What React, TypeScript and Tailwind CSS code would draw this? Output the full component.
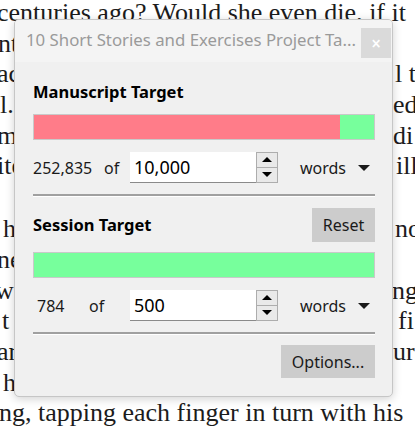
const serif = { fontFamily: '"Liberation Serif", "Times New Roman", serif' };

type Line = { left: string; leftShift?: string; right?: string; rightShift?: string };

const para1: Line[] = [
  { left: "centuries ago? Would she even die, if it", leftShift: "-ml-[3px]" },
  { left: "nt", leftShift: "-ml-[2px]" },
  { left: "ac", leftShift: "-ml-[3px]", right: "l te", rightShift: "ml-[2px]" },
  { left: "l.", leftShift: "ml-0", right: "ed", rightShift: "ml-0" },
  { left: "me", leftShift: "-ml-[3px]", right: "di", rightShift: "ml-0" },
  { left: "ite", leftShift: "-ml-[3px]", right: "ill", rightShift: "ml-[3px]" },
];

const para2: Line[] = [
  { left: "h", leftShift: "ml-[3px]", right: "no", rightShift: "ml-[2px]" },
  { left: "ne", leftShift: "-ml-[3px]" },
  { left: "w", leftShift: "-ml-[5px]", right: "ng", rightShift: "-ml-[1px]" },
  { left: "t", leftShift: "ml-[2px]", right: "fi", rightShift: "ml-[5px]" },
  { left: "ar", leftShift: "-ml-[3px]", right: "ur", rightShift: "ml-0" },
  { left: "h", leftShift: "ml-[3px]" },
  { left: "ng, tapping each finger in turn with his", leftShift: "-ml-[1px]" },
];

function DocLine({ line }: { line: Line }) {
  return (
    <div className="flex whitespace-nowrap h-[30.7px] leading-[30.7px]">
      <div className="w-[393px] shrink-0">
        <span className={`inline-block ${line.leftShift ?? ""}`}>{line.left}</span>
      </div>
      {line.right && (
        <span className={`inline-block shrink-0 ${line.rightShift ?? ""}`}>{line.right}</span>
      )}
    </div>
  );
}

function Bar({ fill }: { fill: string }) {
  return (
    <div className="h-[26px] border border-[#c9c9c9] bg-[#77ff9c] flex">
      <div className={`h-full bg-[#ff7c89] ${fill}`}></div>
    </div>
  );
}

function Spin({ value }: { value: string }) {
  return (
    <div className="w-[148px] h-[31px] bg-white border-b border-[#8a8a8a] flex items-center">
      <span className="flex-1 pl-[4px] text-[18px] text-black">{value}</span>
      <div className="w-[22px] h-[31px] flex flex-col border border-[#adadad] bg-[#e9e9e9]">
        <div className="flex-1 flex items-center justify-center border-b border-[#adadad]">
          <div className="w-0 h-0 border-l-[5px] border-r-[5px] border-b-[5px] border-l-transparent border-r-transparent border-b-black"></div>
        </div>
        <div className="flex-1 flex items-center justify-center">
          <div className="w-0 h-0 border-l-[5px] border-r-[5px] border-t-[5px] border-l-transparent border-r-transparent border-t-black"></div>
        </div>
      </div>
    </div>
  );
}

function Units() {
  return (
    <div className="ml-auto flex items-center">
      <span className="text-[16px] text-[#1a1a1a]">words</span>
      <div className="ml-[12px] mr-[5px] w-0 h-0 border-l-[6px] border-r-[6px] border-t-[6px] border-l-transparent border-r-transparent border-t-[#1a1a1a]"></div>
    </div>
  );
}

function Divider() {
  return <div className="h-[3px] border-t-2 border-[#a0a0a0] border-b border-b-white"></div>;
}

export default function App() {
  return (
    <div className="relative w-[415px] h-[429px] overflow-hidden bg-white">
      <div className="text-[26px] text-[#1c1c1c] -mt-[2px]" style={serif}>
        {para1.map((l, i) => (
          <DocLine key={i} line={l} />
        ))}
        <div className="h-[32px]"></div>
        {para2.map((l, i) => (
          <DocLine key={i} line={l} />
        ))}
      </div>

      <div
        className="absolute left-[14px] top-[19px] w-[379px] h-[378px] rounded-[5px] border border-[#c6c6c6] bg-[#f0f0f0] shadow-[0_2px_10px_rgba(0,0,0,0.18)] overflow-hidden"
        style={{ fontFamily: '"Noto Sans", "Open Sans", sans-serif' }}
      >
        <div className="h-[42px] bg-[#f4f4f4] flex items-start">
          <span className="pl-[11px] pt-[8px] text-[16.8px] leading-[24px] text-[#9a9a9a] whitespace-nowrap">
            10 Short Stories and Exercises Project Ta...
          </span>
          <div className="ml-auto mt-[8px] mr-[1px] w-[30px] h-[30px] bg-[#dadada] flex items-center justify-center text-white text-[17px] font-semibold leading-none">
            ×
          </div>
        </div>

        <div className="pl-[18px] pr-[17px]">
          <div className="mt-[20px] h-[20px] leading-[20px] text-[16.5px] font-bold text-black">Manuscript Target</div>
          <div className="mt-[12px]">
            <Bar fill="w-[90%]" />
          </div>
          <div className="mt-[12px] flex items-center">
            <span className="w-[71px] text-[16px] text-[#1a1a1a]">252,835</span>
            <span className="w-[26px] text-[16px] text-[#1a1a1a]">of</span>
            <Spin value="10,000" />
            <Units />
          </div>
          <div className="mt-[11px]">
            <Divider />
          </div>

          <div className="mt-[11px] flex items-center">
            <span className="text-[16.5px] font-bold text-black">Session Target</span>
            <div className="ml-auto w-[63px] h-[34px] bg-[#cccccc] flex items-center justify-center text-[16px] text-[#1a1a1a]">
              Reset
            </div>
          </div>
          <div className="mt-[10px]">
            <Bar fill="w-0" />
          </div>
          <div className="mt-[12px] flex items-center">
            <span className="w-[56px] pl-[4px] text-[16px] text-[#1a1a1a]">784</span>
            <span className="w-[41px] text-[16px] text-[#1a1a1a]">of</span>
            <Spin value="500" />
            <Units />
          </div>
          <div className="mt-[11px]">
            <Divider />
          </div>
          <div className="mt-[10px] flex">
            <div className="ml-auto w-[94px] h-[33px] bg-[#cccccc] flex items-center justify-center text-[16px] text-[#1a1a1a]">
              Options...
            </div>
          </div>
        </div>
      </div>
    </div>
  );
}
